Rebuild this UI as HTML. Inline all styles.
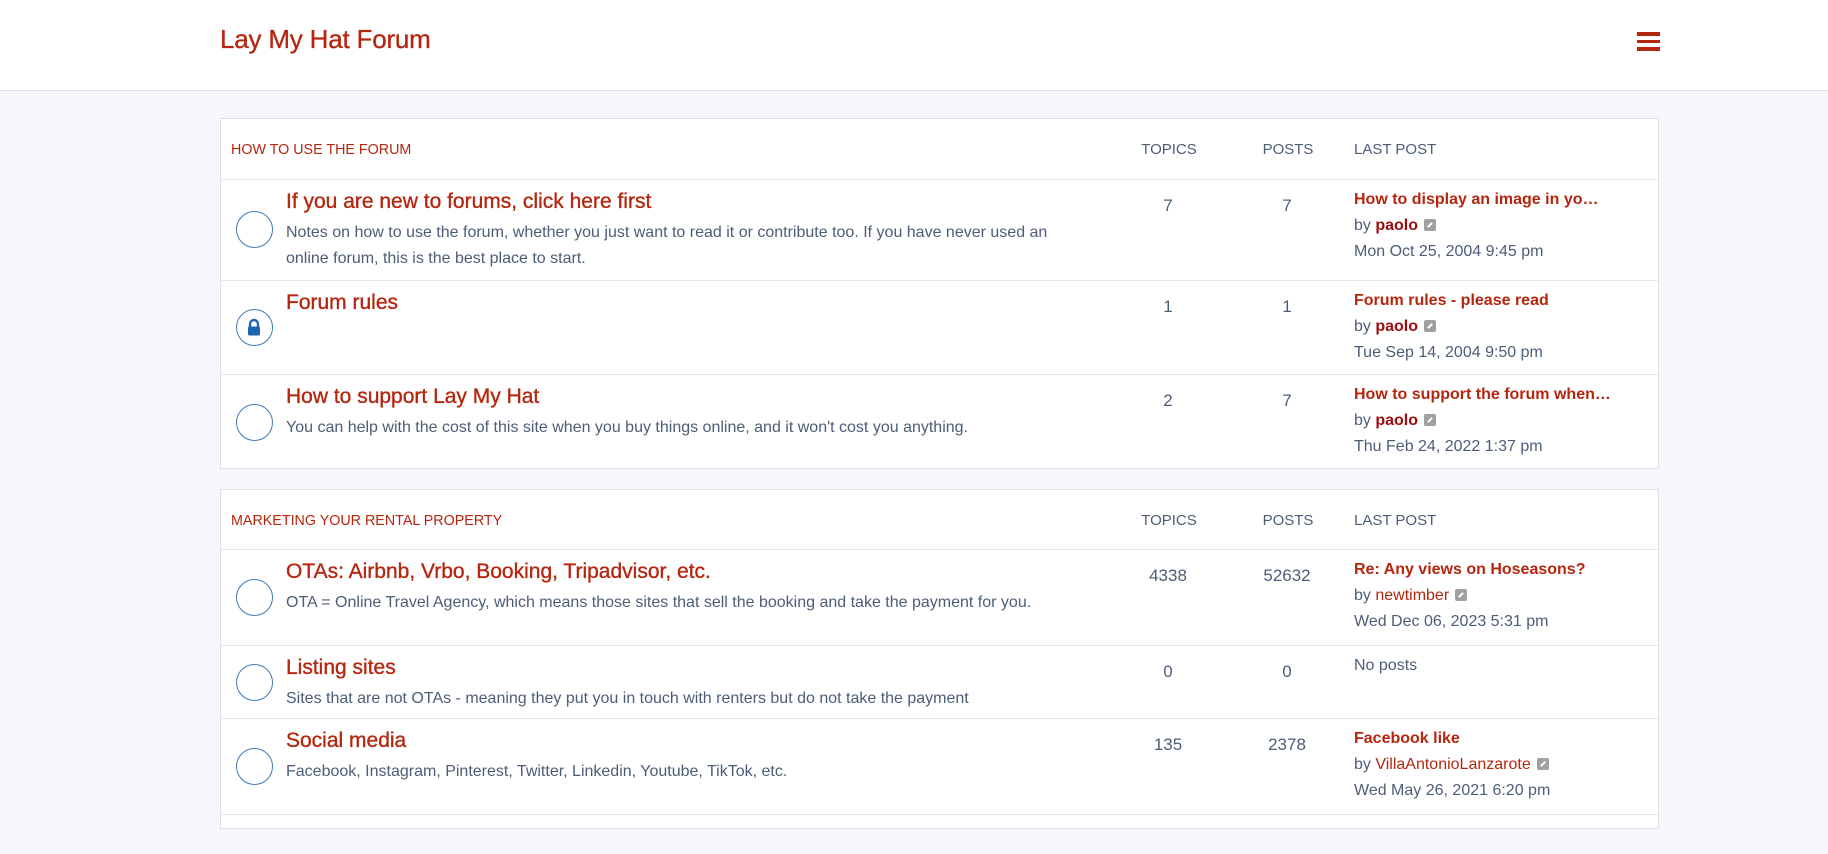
<!DOCTYPE html>
<html><head><meta charset="utf-8"><style>
*{box-sizing:border-box;margin:0;padding:0}
body{width:1828px;height:816px;overflow:hidden;background:#f5f7fa;font-family:"Liberation Sans",sans-serif;color:#4c5d77;position:relative}
.hdr{position:absolute;left:0;top:0;width:1828px;height:91px;background:#fff;border-bottom:1px solid #dde1e7}
.logo{position:absolute;left:220px;top:24px;font-size:26px;color:#b5260f;letter-spacing:-0.2px;-webkit-text-stroke:0.3px #b5260f}
.ham{position:absolute;left:1637px;width:23px;height:3.5px;background:#b5260f}
.box{position:absolute;left:220px;width:1439px;background:#fff;border:1px solid #dde1e7}
.row{position:relative;border-top:1px solid #e3e6ea}
.row:first-child{border-top:none}
.h .cat{position:absolute;left:10px;font-size:14.3px;color:#b5260f}
.h .c{position:absolute;font-size:15px;color:#4c5d77}
.t{position:absolute;left:65px;font-size:21px;color:#b5260f;-webkit-text-stroke:0.35px #b5260f}
.d{position:absolute;left:65px;font-size:16px;line-height:26px;width:795px}
.n{position:absolute;font-size:17px;width:80px;text-align:center}
.lp{position:absolute;left:1133px;font-size:16px;line-height:26px}
.lp b{color:#b5260f}
.lp .u{color:#9e0b0f;font-weight:bold}
.lp .u2{color:#b5260f}
.ic{display:inline-block;width:12px;height:12px;background:#a0a0a0;border-radius:2px;vertical-align:-1px;margin-left:6px;position:relative}
.ic:after{content:"";position:absolute;left:3px;top:5px;width:6px;height:2px;background:#fff;transform:rotate(-45deg)}
.circ{position:absolute;left:15px;width:37px;height:37px;border:1.5px solid #3f7ab5;border-radius:50%}
</style></head><body>
<div class="hdr"><div class="logo">Lay My Hat Forum</div>
<div class="ham" style="top:32px"></div><div class="ham" style="top:39.5px"></div><div class="ham" style="top:47px"></div></div>

<div class="box" style="top:118px;height:351px">
<div class="row h" style="height:60px">
<div class="cat" style="top:23px">HOW TO USE THE FORUM</div>
<div class="c" style="left:898px;top:22px;width:100px;text-align:center">TOPICS</div>
<div class="c" style="left:1017px;top:22px;width:100px;text-align:center">POSTS</div>
<div class="c" style="left:1133px;top:22px">LAST POST</div>
</div>
<div class="row" style="height:101px">
<div class="circ" style="top:31px"></div>
<div class="t" style="top:10px">If you are new to forums, click here first</div>
<div class="d" style="top:40px">Notes on how to use the forum, whether you just want to read it or contribute too. If you have never used an online forum, this is the best place to start.</div>
<div class="n" style="left:907px;top:16px">7</div><div class="n" style="left:1026px;top:16px">7</div>
<div class="lp" style="top:7px"><b>How to display an image in yo…</b><br>by <span class="u">paolo</span><span class="ic"></span><br>Mon Oct 25, 2004 9:45 pm</div>
</div>
<div class="row" style="height:94px">
<div class="circ" style="top:28px"><svg width="34" height="34" viewBox="0 0 34 34" style="position:absolute;left:0;top:0"><path d="M13 17v-3a4 4 0 0 1 8 0v3" fill="none" stroke="#1e66b0" stroke-width="2.4"/><rect x="11" y="16.5" width="12" height="9" rx="1.5" fill="#1e66b0"/></svg></div>
<div class="t" style="top:10px">Forum rules</div>
<div class="n" style="left:907px;top:16px">1</div><div class="n" style="left:1026px;top:16px">1</div>
<div class="lp" style="top:7px"><b>Forum rules - please read</b><br>by <span class="u">paolo</span><span class="ic"></span><br>Tue Sep 14, 2004 9:50 pm</div>
</div>
<div class="row" style="height:96px">
<div class="circ" style="top:29px"></div>
<div class="t" style="top:10px">How to support Lay My Hat</div>
<div class="d" style="top:40px">You can help with the cost of this site when you buy things online, and it won't cost you anything.</div>
<div class="n" style="left:907px;top:16px">2</div><div class="n" style="left:1026px;top:16px">7</div>
<div class="lp" style="top:7px"><b>How to support the forum when…</b><br>by <span class="u">paolo</span><span class="ic"></span><br>Thu Feb 24, 2022 1:37 pm</div>
</div>
</div>

<div class="box" style="top:489px;height:340px">
<div class="row h" style="height:59px">
<div class="cat" style="top:23px">MARKETING YOUR RENTAL PROPERTY</div>
<div class="c" style="left:898px;top:22px;width:100px;text-align:center">TOPICS</div>
<div class="c" style="left:1017px;top:22px;width:100px;text-align:center">POSTS</div>
<div class="c" style="left:1133px;top:22px">LAST POST</div>
</div>
<div class="row" style="height:96px">
<div class="circ" style="top:29px"></div>
<div class="t" style="top:10px">OTAs: Airbnb, Vrbo, Booking, Tripadvisor, etc.</div>
<div class="d" style="top:40px">OTA = Online Travel Agency, which means those sites that sell the booking and take the payment for you.</div>
<div class="n" style="left:907px;top:16px">4338</div><div class="n" style="left:1026px;top:16px">52632</div>
<div class="lp" style="top:7px"><b>Re: Any views on Hoseasons?</b><br>by <span class="u2">newtimber</span><span class="ic"></span><br>Wed Dec 06, 2023 5:31 pm</div>
</div>
<div class="row" style="height:73px">
<div class="circ" style="top:18px"></div>
<div class="t" style="top:10px">Listing sites</div>
<div class="d" style="top:40px">Sites that are not OTAs - meaning they put you in touch with renters but do not take the payment</div>
<div class="n" style="left:907px;top:16px">0</div><div class="n" style="left:1026px;top:16px">0</div>
<div class="lp" style="top:7px">No posts</div>
</div>
<div class="row" style="height:96px">
<div class="circ" style="top:29px"></div>
<div class="t" style="top:10px">Social media</div>
<div class="d" style="top:40px">Facebook, Instagram, Pinterest, Twitter, Linkedin, Youtube, TikTok, etc.</div>
<div class="n" style="left:907px;top:16px">135</div><div class="n" style="left:1026px;top:16px">2378</div>
<div class="lp" style="top:7px"><b>Facebook like</b><br>by <span class="u2">VillaAntonioLanzarote</span><span class="ic"></span><br>Wed May 26, 2021 6:20 pm</div>
</div>
<div class="row" style="height:40px"></div>
</div>
</body></html>
